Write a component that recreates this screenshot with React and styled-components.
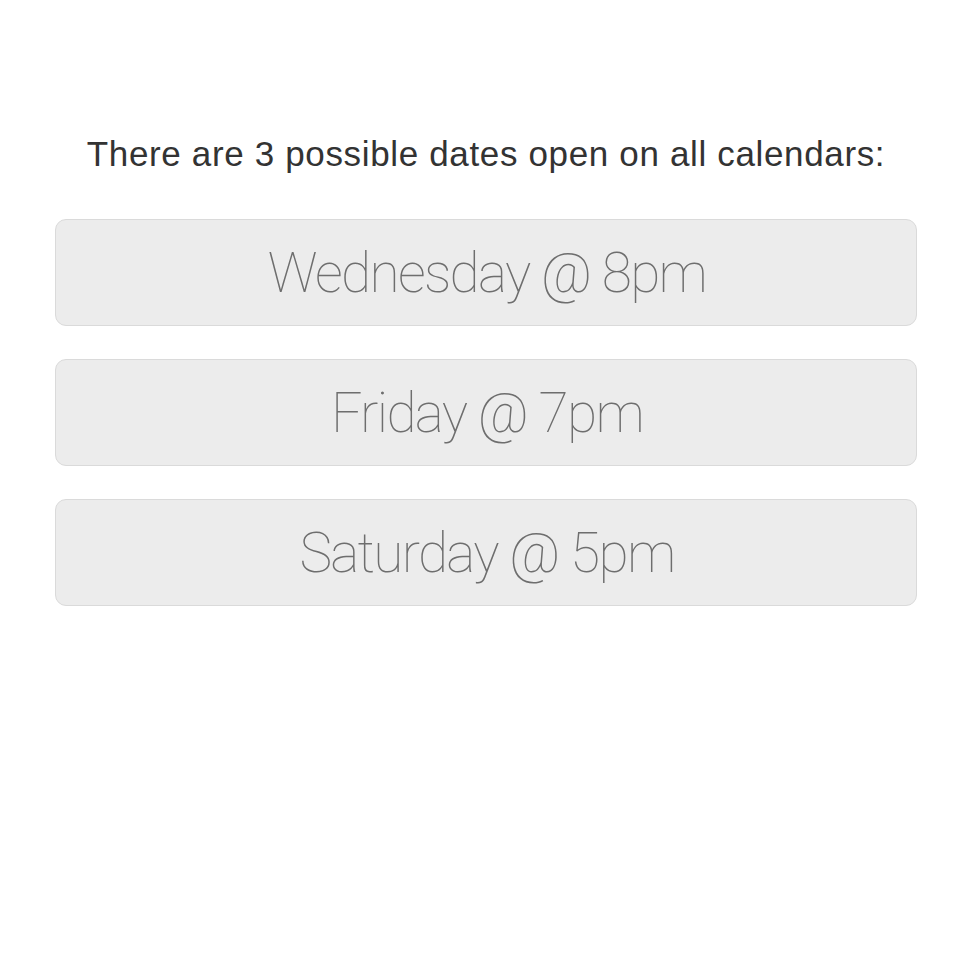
import React from "react";
import styled, { createGlobalStyle } from "styled-components";

const Global = createGlobalStyle`
  html, body { margin: 0; padding: 0; background: #ffffff; }
  body { width: 976px; height: 978px; overflow: hidden; }
`;

const Page = styled.div`
  width: 976px;
  height: 978px;
  box-sizing: border-box;
  padding: 133px 59px 0 55px;
  display: flex;
  flex-direction: column;
  background: #ffffff;
`;

const Heading = styled.h1`
  margin: 0 0 44px;
  font-family: "Liberation Sans", Arial, sans-serif;
  font-weight: 400;
  font-size: 35px;
  line-height: 42px;
  letter-spacing: 0.65px;
  color: #333333;
  text-align: center;
  white-space: nowrap;
`;

const List = styled.div`
  display: flex;
  flex-direction: column;
  gap: 33px;
`;

const DateButton = styled.button`
  height: 107px;
  width: 100%;
  box-sizing: border-box;
  border: 1.5px solid #dadada;
  border-radius: 11px;
  background: #ececec;
  color: #6e6e6e;
  font-family: Roboto, "Liberation Sans", sans-serif;
  font-weight: 100;
  font-size: 55px;
  letter-spacing: -1.7px;
  display: flex;
  align-items: center;
  justify-content: center;
  padding: 0 0 0 2px;
  cursor: pointer;
`;

const dates = ["Wednesday @ 8pm", "Friday @ 7pm", "Saturday @ 5pm"];

export default function App() {
  return (
    <>
      <Global />
      <Page>
        <Heading>There are 3 possible dates open on all calendars:</Heading>
        <List>
          {dates.map((d) => (
            <DateButton key={d}>{d}</DateButton>
          ))}
        </List>
      </Page>
    </>
  );
}
